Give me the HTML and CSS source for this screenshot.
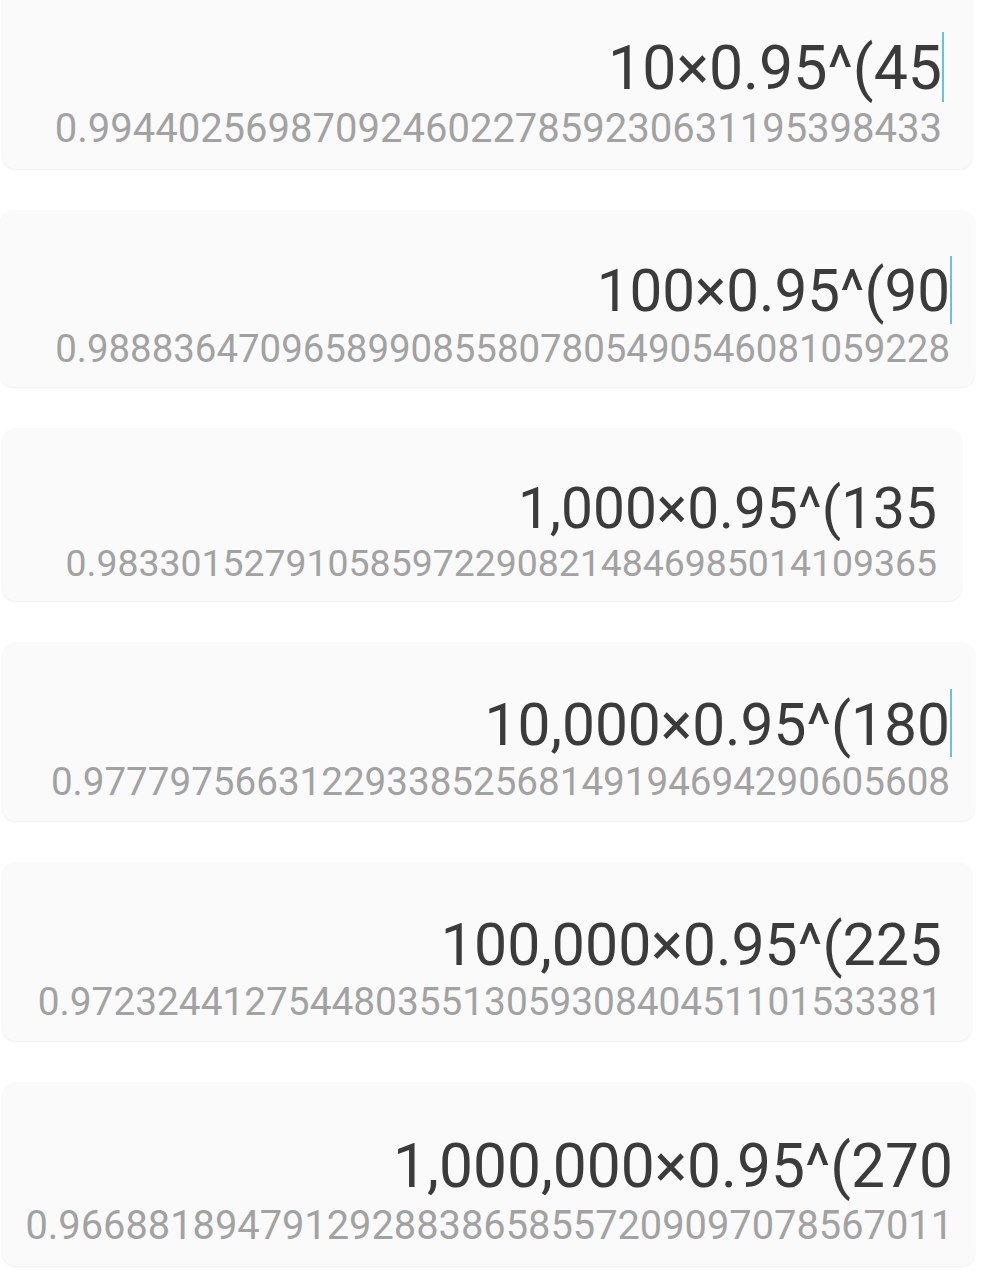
FILE: index.html
```html
<!DOCTYPE html>
<html lang="en">

    <head>
        <meta charset="UTF-8">
        <meta name="viewport" content="width=device-width, initial-scale=1.0">
        <title>History</title>
        <link rel="stylesheet" href="styles.css">
    </head>

    <body>
        <main class="history">
            <section class="entry">
                <div class="expr">10×0.95^(45<span class="caret"></span></div>
                <div class="result">0.99440256987092460227859230631195398433</div>
            </section>
            <section class="entry">
                <div class="expr">100×0.95^(90<span class="caret"></span></div>
                <div class="result">0.9888364709658990855807805490546081059228</div>
            </section>
            <section class="entry">
                <div class="expr">1,000×0.95^(135</div>
                <div class="result">0.9833015279105859722908214846985014109365</div>
            </section>
            <section class="entry">
                <div class="expr">10,000×0.95^(180<span class="caret"></span></div>
                <div class="result">0.9777975663122933852568149194694290605608</div>
            </section>
            <section class="entry">
                <div class="expr">100,000×0.95^(225</div>
                <div class="result">0.9723244127544803551305930840451101533381</div>
            </section>
            <section class="entry">
                <div class="expr">1,000,000×0.95^(270</div>
                <div class="result">0.9668818947912928838658557209097078567011</div>
            </section>
        </main>
    </body>

</html>
```

FILE: styles.css
```css
* {
    margin: 0;
    padding: 0;
    box-sizing: border-box;
}

body {
    font-family: Roboto, 'Noto Sans', sans-serif;
    background-color: #fff;
    width: 999px;
    height: 1286px;
    overflow: hidden;
}

.history {
    display: flex;
    flex-direction: column;
    gap: 41px;
    margin-top: -16px;
}

/* each entry is a separate screenshot, so the sizes differ a little */
.entry {
    margin: 0 24px 0 2px;
    padding: 1.26em 25px 0.41em 20px;
    font-size: 40px;
    background-color: #fafafa;
    border-radius: 14px;
    box-shadow: 0 1px 2px rgba(0, 0, 0, 0.07);
    text-align: right;
}

.entry:nth-child(1) {
    font-size: 40px;
    margin-right: 26px;
    padding-right: 31px;
}

.entry:nth-child(2) {
    font-size: 38.4px;
    margin-left: 0;
}

.entry:nth-child(3) {
    font-size: 37.4px;
    margin-right: 37px;
}

.entry:nth-child(4) {
    font-size: 38.6px;
}

.entry:nth-child(5) {
    font-size: 38.8px;
    margin-right: 27px;
    padding-right: 30px;
}

.entry:nth-child(6) {
    font-size: 39.8px;
    padding-right: 22px;
}

.expr {
    font-size: 1.52em;
    line-height: 1.16;
    color: #3b3b3b;
    white-space: nowrap;
}

.result {
    font-size: 1em;
    line-height: 1.19;
    color: #a2a2a2;
    white-space: nowrap;
}

.caret {
    display: inline-block;
    width: 2px;
    height: 1.16em;
    margin-top: -0.1em;
    margin-right: -2px;
    vertical-align: -0.21em;
    background-color: #6bbfdf;
}
```
